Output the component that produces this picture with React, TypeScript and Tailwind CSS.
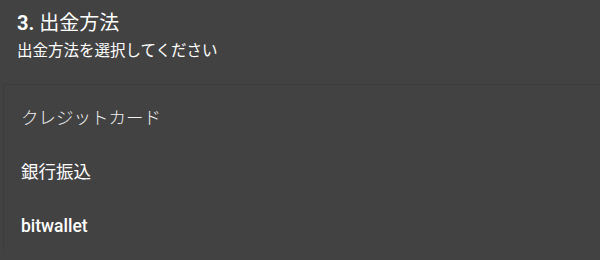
const METHODS = [
  { label: 'クレジットカード', className: 'font-light text-[#f2f2f2]' },
  { label: '銀行振込', className: 'font-normal text-white' },
  { label: 'bitwallet', className: 'font-medium text-white' },
];

export default function App() {
  return (
    <div
      className="h-[260px] w-[600px] overflow-hidden bg-[#424242] text-white"
      style={{ fontFamily: 'Roboto, "Noto Sans CJK JP", sans-serif' }}
    >
      <div className="px-[17px] pt-[10px]">
        <h3 className="text-[20px] leading-[26px]">
          <span className="font-bold">3.</span> 出金方法
        </h3>
        <p className="mt-[5px] text-[15.5px] leading-[20px]">出金方法を選択してください</p>
      </div>

      <ul className="ml-[3px] mt-[23px] border-l border-t border-[#3d3d3d] pt-[7px]">
        {METHODS.map((m) => (
          <li key={m.label} className="flex h-[54px] items-center pl-[17px]">
            <span className={['text-[17.5px] leading-none', m.className].join(' ')}>{m.label}</span>
          </li>
        ))}
      </ul>
    </div>
  );
}
